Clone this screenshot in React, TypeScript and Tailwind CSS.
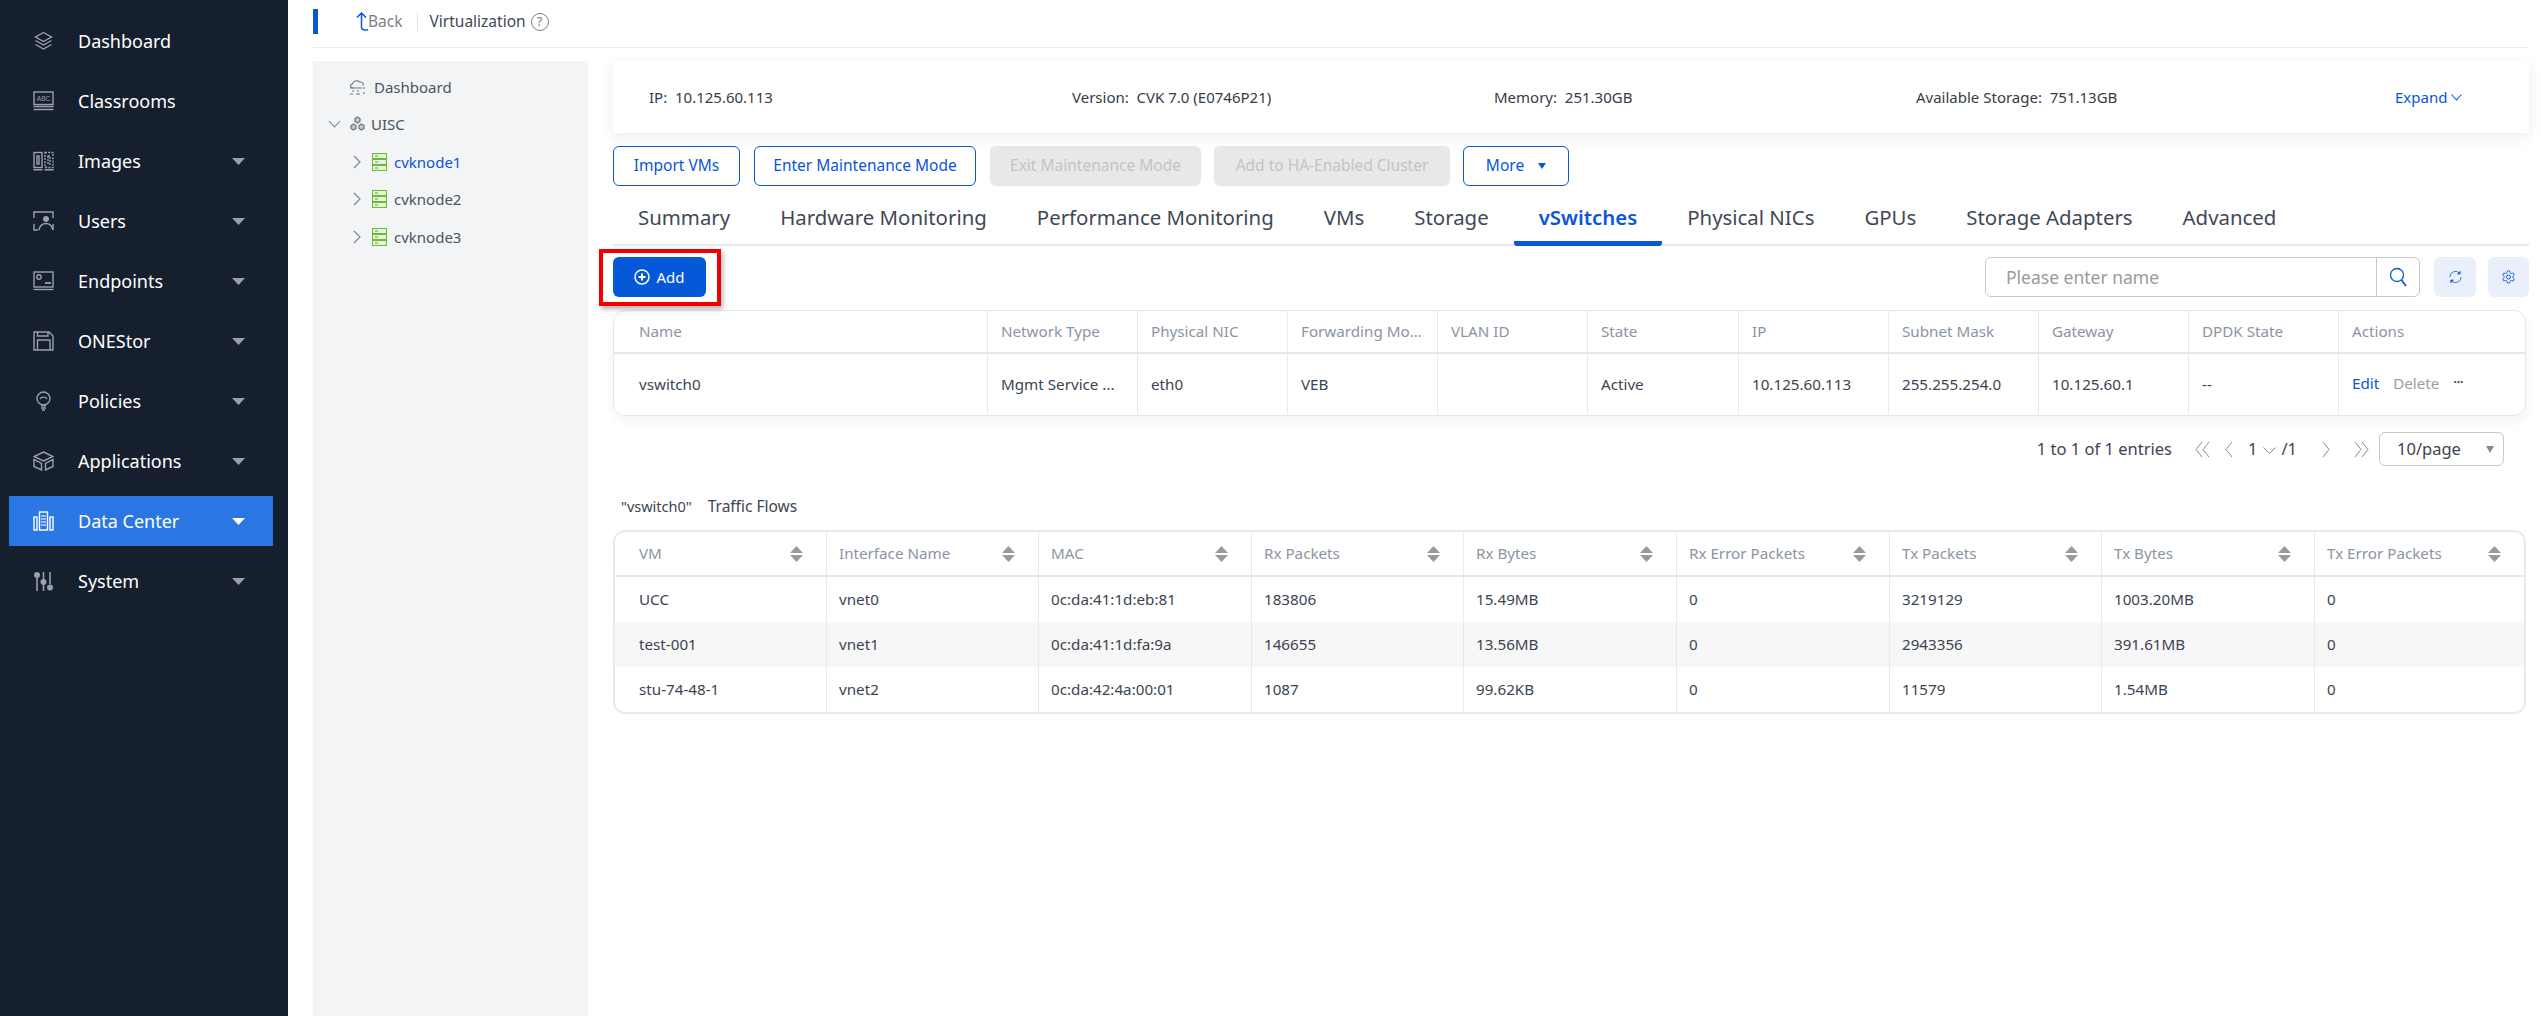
import React from "react";

const S = { stroke: "currentColor", fill: "none", strokeWidth: 1.4 } as const;

const NavIcons: Record<string, React.ReactNode> = {
  Dashboard: (
    <svg width="21" height="20" viewBox="0 0 21 20" {...S}>
      <path d="M10.5 1.5 18.5 6 10.5 10.5 2.5 6Z" />
      <path d="M2.5 9.5 10.5 14 18.5 9.5" />
      <path d="M2.5 13.5 10.5 18 18.5 13.5" />
    </svg>
  ),
  Classrooms: (
    <svg width="21" height="20" viewBox="0 0 21 20" {...S}>
      <rect x="1" y="1" width="19" height="12.5" />
      <text x="10.5" y="10" textAnchor="middle" fontSize="6.5" fill="currentColor" stroke="none" fontFamily="Liberation Sans">ABC</text>
      <path d="M0.5 15.5H20.5M0.5 18.5H20.5" />
    </svg>
  ),
  Images: (
    <svg width="21" height="20" viewBox="0 0 21 20" {...S}>
      <rect x="1" y="1.5" width="8" height="15" />
      <rect x="4" y="5" width="2" height="8" />
      <rect x="12" y="1.5" width="8" height="15" strokeDasharray="2 1.2" />
      <rect x="15" y="5" width="2" height="8" strokeDasharray="2 1" />
      <path d="M0.5 18.8H9.5M11.5 18.8H20.5" />
    </svg>
  ),
  Users: (
    <svg width="21" height="20" viewBox="0 0 21 20" {...S}>
      <path d="M1 7V1H20V7M1 13V19H5M20 13V19" />
      <circle cx="13" cy="8" r="3" fill="currentColor" stroke="none" />
      <path d="M6 19C7 14 10 12.5 13 12.5S19 15 20 19" />
    </svg>
  ),
  Endpoints: (
    <svg width="21" height="20" viewBox="0 0 21 20" {...S}>
      <rect x="1" y="1" width="19" height="15" />
      <circle cx="6" cy="6" r="2.2" />
      <path d="M12 12H18" strokeWidth="1.8" />
      <path d="M0.5 18.5H20.5" />
    </svg>
  ),
  ONEStor: (
    <svg width="21" height="20" viewBox="0 0 21 20" {...S}>
      <path d="M1 1H16L20 5V19H1Z" />
      <path d="M4.5 1V5H15V1" />
      <path d="M4.5 19V9H17V19" />
    </svg>
  ),
  Policies: (
    <svg width="21" height="20" viewBox="0 0 21 20" {...S}>
      <circle cx="10.5" cy="7.5" r="6.5" />
      <path d="M7 8C8 5.5 13 5.5 14 8" />
      <path d="M8 14.8H13M8 17H13M9 19H12" />
    </svg>
  ),
  Applications: (
    <svg width="21" height="20" viewBox="0 0 21 20" {...S}>
      <path d="M10.5 1 20 5.5 10.5 10 1 5.5Z" />
      <path d="M1 8.5V15.5L8.5 19V12.5L1 8.5ZM20 8.5V15.5L12.5 19V12.5L20 8.5Z" />
    </svg>
  ),
  "Data Center": (
    <svg width="21" height="20" viewBox="0 0 21 20" {...S}>
      <rect x="1" y="6" width="3" height="13" />
      <rect x="6.5" y="1" width="8" height="18" />
      <path d="M8 5H13M8 8H13M8 11H13M8 14H13" stroke="#bcd3ff" />
      <rect x="17" y="6" width="3" height="13" />
    </svg>
  ),
  System: (
    <svg width="21" height="20" viewBox="0 0 21 20" {...S} strokeWidth="1.6">
      <path d="M4 5V20M10.5 1V9M10.5 13V20M17 1V13" />
      <circle cx="4" cy="4" r="3" fill="currentColor" stroke="none" />
      <circle cx="10.5" cy="11" r="3" fill="currentColor" stroke="none" />
      <circle cx="17" cy="16.5" r="3" fill="currentColor" stroke="none" />
    </svg>
  ),
};

const navItems: [string, boolean][] = [
  ["Dashboard", false],
  ["Classrooms", false],
  ["Images", true],
  ["Users", true],
  ["Endpoints", true],
  ["ONEStor", true],
  ["Policies", true],
  ["Applications", true],
  ["Data Center", true],
  ["System", true],
];

function Caret({ active }: { active: boolean }) {
  return (
    <svg width="13" height="7" viewBox="0 0 13 7" className={active ? "ml-auto mr-[28px] text-white" : "ml-auto mr-[28px] text-[#9a9fa8]"}>
      <path d="M0 0H13L6.5 7Z" fill="currentColor" />
    </svg>
  );
}

function Sidebar() {
  return (
    <aside className="w-[288px] shrink-0 bg-[#161f2e] pt-[16px] pl-[9px] pr-[15px] min-h-[1016px]">
      {navItems.map(([name, hasCaret]) => {
        const active = name === "Data Center";
        return (
          <div
            key={name}
            className={
              active
                ? "flex items-center h-[50px] mb-[10px] bg-[#2a77e4] text-white"
                : "flex items-center h-[50px] mb-[10px] text-white"
            }
          >
            <span className={active ? "w-[69px] pl-[24px] text-white flex" : "w-[69px] pl-[24px] text-[#9ba1aa] flex"}>{NavIcons[name]}</span>
            <span className="text-[18px] leading-none">{name}</span>
            {hasCaret && <Caret active={active} />}
          </div>
        );
      })}
    </aside>
  );
}

function TreeServer() {
  return (
    <svg width="15" height="18" viewBox="0 0 15 18">
      <rect x="0.5" y="0.5" width="14" height="5" fill="#e6f3db" stroke="#6dbb35" />
      <rect x="0.5" y="6.5" width="14" height="5" fill="#e6f3db" stroke="#6dbb35" />
      <rect x="0.5" y="12.5" width="14" height="5" fill="#e6f3db" stroke="#6dbb35" />
      <path d="M3 3H6M3 9H6M3 15H6" stroke="#7d8a74" />
    </svg>
  );
}

function Chevron({ dir, className }: { dir: "r" | "d"; className?: string }) {
  return dir === "r" ? (
    <svg width="8" height="14" viewBox="0 0 8 14" className={className} fill="none" stroke="#7b8390" strokeWidth="1.1">
      <path d="M1 1 7 7 1 13" />
    </svg>
  ) : (
    <svg width="13" height="8" viewBox="0 0 13 8" className={className} fill="none" stroke="#7b8390" strokeWidth="1.1">
      <path d="M1 1 6.5 7 12 1" />
    </svg>
  );
}

function TreePanel() {
  const nodes = [
    ["cvknode1", "text-[#0a55d8]", "mt-[18px]"],
    ["cvknode2", "text-[#4a5361]", "mt-[17px]"],
    ["cvknode3", "text-[#4a5361]", "mt-[18px]"],
  ];
  return (
    <div className="w-[275px] shrink-0 bg-[#f3f4f6] pt-[16px] text-[15px] leading-[20px] text-[#4a5361]">
      <div className="flex items-center pl-[36px] h-[20px]">
        <svg width="18" height="16" viewBox="0 0 18 16" fill="none" stroke="#6b7380" strokeWidth="1.1" className="mr-[7px]">
          <path d="M4 9C1 9 .5 5.5 3.5 5 4 2 8 .5 10.5 3 13.5 2.5 15 5 14 6.5" />
          <path d="M1 9H13M3 12H5M8 12H10M1 15H4M7 15H11M15 8V10M15 13V15" />
        </svg>
        <span>Dashboard</span>
      </div>
      <div className="flex items-center pl-[15px] h-[20px] mt-[17px]">
        <Chevron dir="d" className="mr-[9px]" />
        <svg width="15" height="17" viewBox="0 0 15 17" fill="none" stroke="#6b7380" strokeWidth="1.2" className="mr-[6px]">
          <path d="M7.5 1 10 2.5V5.5L7.5 7 5 5.5V2.5Z" fill="#c4c8ce" />
          <path d="M3.5 8 6 9.5V12.5L3.5 14 1 12.5V9.5Z" fill="#c4c8ce" />
          <path d="M11.5 8 14 9.5V12.5L11.5 14 9 12.5V9.5Z" fill="#c4c8ce" />
        </svg>
        <span>UISC</span>
      </div>
      {nodes.map(([n, c, m]) => (
        <div key={n} className={`flex items-center pl-[40px] h-[20px] ${m}`}>
          <Chevron dir="r" className="mr-[11px]" />
          <TreeServer />
          <span className={`ml-[7px] ${c}`}>{n}</span>
        </div>
      ))}
    </div>
  );
}

function InfoCard() {
  return (
    <div className="h-[72px] bg-white shadow-[0_4px_14px_rgba(0,0,0,0.08)] flex items-center pl-[36px] text-[15px] text-[#363c47]">
      <span className="w-[423px]">IP:&nbsp; 10.125.60.113</span>
      <span className="w-[422px]">Version:&nbsp; CVK 7.0 (E0746P21)</span>
      <span className="w-[422px]">Memory:&nbsp; 251.30GB</span>
      <span className="w-[479px]">Available Storage:&nbsp; 751.13GB</span>
      <span className="flex items-center gap-[4px] text-[#0a55d8]">
        Expand
        <svg width="11" height="7" viewBox="0 0 11 7" fill="none" stroke="currentColor" strokeWidth="1.1">
          <path d="M.5.5 5.5 6 10.5.5" />
        </svg>
      </span>
    </div>
  );
}

function ActionButtons() {
  const outline = "h-[40px] rounded-[6px] border border-[#0a55d8] bg-white text-[#0a55d8] flex items-center justify-center text-[15.5px]";
  const disabled = "h-[40px] rounded-[6px] bg-[#e8e8e8] text-[#c2c4c8] flex items-center justify-center text-[15.5px]";
  return (
    <div className="flex mt-[13px]">
      <button className={`${outline} w-[127px]`}>Import VMs</button>
      <button className={`${outline} w-[222px] ml-[14px]`}>Enter Maintenance Mode</button>
      <button className={`${disabled} w-[211px] ml-[14px]`}>Exit Maintenance Mode</button>
      <button className={`${disabled} w-[236px] ml-[13px]`}>Add to HA-Enabled Cluster</button>
      <button className={`${outline} w-[106px] ml-[13px] gap-[14px]`}>
        More
        <svg width="8" height="6" viewBox="0 0 8 6"><path d="M0 0H8L4 6Z" fill="currentColor" /></svg>
      </button>
    </div>
  );
}

function Tabs() {
  const tabs = ["Summary", "Hardware Monitoring", "Performance Monitoring", "VMs", "Storage", "vSwitches", "Physical NICs", "GPUs", "Storage Adapters", "Advanced"];
  return (
    <div className="flex h-[60px] border-b-2 border-[#e8e9ec]">
      {tabs.map((t) => {
        const active = t === "vSwitches";
        return (
          <div
            key={t}
            className={
              active
                ? "px-[25px] pt-[17px] h-[60px] text-[20.4px] leading-[28px] font-semibold text-[#0a55d8] border-b-[5px] rounded-b-[3px] border-[#0a55d8]"
                : "px-[25px] pt-[17px] h-[60px] text-[20.4px] leading-[28px] text-[#3f4856]"
            }
          >
            {t}
          </div>
        );
      })}
    </div>
  );
}

function Toolbar() {
  return (
    <div className="flex mt-[11px] h-[40px] items-center">
      <div className="relative">
        <button className="w-[93px] h-[40px] rounded-[6px] bg-[#0558d8] text-white flex items-center justify-center gap-[6px] text-[15px]">
          <svg width="16" height="16" viewBox="0 0 16 16" fill="none" stroke="currentColor" strokeWidth="1.5">
            <circle cx="8" cy="8" r="7" />
            <path d="M8 4.5V11.5M4.5 8H11.5" strokeWidth="2" />
          </svg>
          Add
        </button>
        <div className="absolute left-[-14px] top-[-8px] w-[122px] h-[57px] border-[4px] border-[#f00000] shadow-[2px_3px_5px_rgba(0,0,0,0.3)]" />
      </div>
      <div className="ml-auto w-[435px] h-[40px] rounded-[6px] border border-[#c9c9c9] flex items-center">
        <span className="flex-1 pl-[20px] text-[17.5px] text-[#9a9a9a]">Please enter name</span>
        <span className="w-[43px] h-[38px] border-l border-[#c9c9c9] flex items-center justify-center">
          <svg width="18" height="20" viewBox="0 0 18 20" fill="none" stroke="#0a55d8" strokeWidth="1.3">
            <circle cx="8" cy="8" r="6.5" />
            <path d="M12.5 13 17 19" strokeWidth="1.8" />
          </svg>
        </span>
      </div>
      <button className="ml-[14px] w-[42px] h-[40px] rounded-[6px] bg-[#e9f0fc] flex items-center justify-center">
        <svg width="15" height="16" viewBox="0 0 16 16" fill="none" stroke="#2f6fdc" strokeWidth="1">
          <path d="M2 8A6 6 0 0 1 12.5 4" />
          <path d="M14 8A6 6 0 0 1 3.5 12" />
          <path d="M13 2V4.8H10.2Z" fill="#0a55d8" />
          <path d="M3 14V11.2H5.8Z" fill="#0a55d8" />
        </svg>
      </button>
      <button className="ml-[12px] w-[41px] h-[40px] rounded-[6px] bg-[#e9f0fc] flex items-center justify-center">
        <svg width="15" height="18" viewBox="0 0 24 24" fill="none" stroke="#0a55d8" strokeWidth="1.5">
          <path d="M12.22 2h-.44a2 2 0 0 0-2 2v.18a2 2 0 0 1-1 1.73l-.43.25a2 2 0 0 1-2 0l-.15-.08a2 2 0 0 0-2.73.73l-.22.38a2 2 0 0 0 .73 2.73l.15.1a2 2 0 0 1 1 1.72v.51a2 2 0 0 1-1 1.74l-.15.09a2 2 0 0 0-.73 2.73l.22.38a2 2 0 0 0 2.73.73l.15-.08a2 2 0 0 1 2 0l.43.25a2 2 0 0 1 1 1.73V20a2 2 0 0 0 2 2h.44a2 2 0 0 0 2-2v-.18a2 2 0 0 1 1-1.73l.43-.25a2 2 0 0 1 2 0l.15.08a2 2 0 0 0 2.73-.73l.22-.39a2 2 0 0 0-.73-2.73l-.15-.08a2 2 0 0 1-1-1.74v-.5a2 2 0 0 1 1-1.74l.15-.09a2 2 0 0 0 .73-2.73l-.22-.38a2 2 0 0 0-2.73-.73l-.15.08a2 2 0 0 1-2 0l-.43-.25a2 2 0 0 1-1-1.73V4a2 2 0 0 0-2-2z" />
          <circle cx="12" cy="12" r="3.2" />
        </svg>
      </button>
    </div>
  );
}

function SwitchTable() {
  const cols = "grid grid-cols-[374px_150px_150px_150px_150px_151px_150px_150px_150px_150px_1fr]";
  const head = ["Name", "Network Type", "Physical NIC", "Forwarding Mo...", "VLAN ID", "State", "IP", "Subnet Mask", "Gateway", "DPDK State", "Actions"];
  const row = ["vswitch0", "Mgmt Service ...", "eth0", "VEB", "", "Active", "10.125.60.113", "255.255.254.0", "10.125.60.1", "--"];
  return (
    <div className="mt-[13px] w-[1913px] h-[106px] rounded-[12px] border border-[#e6e7ea] shadow-[0_5px_12px_rgba(0,0,0,0.05)] text-[15.2px]">
      <div className={`${cols} h-[43px] border-b-2 border-[#e6e7ea] text-[#8b94a3]`}>
        {head.map((h, i) => (
          <div key={h} className={i === 0 ? "pl-[25px] flex items-center border-r border-[#e9eaed]" : i === 10 ? "pl-[13px] flex items-center" : "pl-[13px] flex items-center border-r border-[#e9eaed] whitespace-nowrap overflow-hidden"}>
            {h}
          </div>
        ))}
      </div>
      <div className={`${cols} h-[60px] text-[#3c4452]`}>
        {row.map((c, i) => (
          <div key={i} className={i === 0 ? "pl-[25px] flex items-center border-r border-[#e9eaed]" : "pl-[13px] flex items-center border-r border-[#e9eaed] whitespace-nowrap overflow-hidden"}>
            {c}
          </div>
        ))}
        <div className="pl-[13px] flex items-center pb-[2px]">
          <span className="text-[#0a55d8]">Edit</span>
          <span className="ml-[14px] text-[#9a9da3]">Delete</span>
          <span className="ml-[14px] mb-[8px] text-[#3c4452] font-bold text-[12px] leading-none">...</span>
        </div>
      </div>
    </div>
  );
}

function Pagination() {
  const chev = (d: string, w: number, k: string) => (
    <svg key={k} width={w} height="17" viewBox={`0 0 ${w} 17`} fill="none" stroke="#858b95" strokeWidth="1">
      <path d={d} />
    </svg>
  );
  return (
    <div className="mt-[16px] h-[34px] w-[1891px] flex items-center justify-end text-[16.5px] text-[#3c4452]">
      <span>1 to 1 of 1 entries</span>
      <span className="ml-[23px]">{chev("M7 1 1 8.5 7 16M14 1 8 8.5 14 16", 15, "a")}</span>
      <span className="ml-[15px]">{chev("M7 1 1 8.5 7 16", 8, "b")}</span>
      <span className="ml-[15px]">1</span>
      <svg width="13" height="7" viewBox="0 0 13 7" fill="none" stroke="#858b95" className="ml-[6px] mt-[2px]">
        <path d="M.5.5 6.5 6.5 12.5.5" />
      </svg>
      <span className="ml-[5px]">/1</span>
      <span className="ml-[25px]">{chev("M1 1 7 8.5 1 16", 8, "c")}</span>
      <span className="ml-[24px]">{chev("M1 1 7 8.5 1 16M8 1 14 8.5 8 16", 15, "d")}</span>
      <div className="ml-[10px] w-[125px] h-[34px] rounded-[6px] border border-[#c9c9c9] flex items-center pl-[17px] pr-[9px]">
        <span>10/page</span>
        <svg width="8" height="7" viewBox="0 0 8 7" className="ml-auto"><path d="M0 0H8L4 7Z" fill="#8a8a8a" /></svg>
      </div>
    </div>
  );
}

function Sort() {
  return (
    <svg width="13" height="16" viewBox="0 0 13 16" className="ml-auto mr-[23px]">
      <path d="M6.5 0 13 7H0Z M0 9H13L6.5 16Z" fill="#989a9e" />
    </svg>
  );
}

function FlowTable() {
  const cols = "grid grid-cols-[212px_212px_213px_212px_213px_213px_212px_213px_1fr]";
  const head = ["VM", "Interface Name", "MAC", "Rx Packets", "Rx Bytes", "Rx Error Packets", "Tx Packets", "Tx Bytes", "Tx Error Packets"];
  const rows = [
    ["UCC", "vnet0", "0c:da:41:1d:eb:81", "183806", "15.49MB", "0", "3219129", "1003.20MB", "0"],
    ["test-001", "vnet1", "0c:da:41:1d:fa:9a", "146655", "13.56MB", "0", "2943356", "391.61MB", "0"],
    ["stu-74-48-1", "vnet2", "0c:da:42:4a:00:01", "1087", "99.62KB", "0", "11579", "1.54MB", "0"],
  ];
  return (
    <div className="mt-[13px] w-[1913px] h-[184px] rounded-[12px] border-2 border-[#e9eaed] overflow-hidden text-[15.2px]">
      <div className={`${cols} h-[45px] border-b-2 border-[#e6e7ea] text-[#8b94a3]`}>
        {head.map((h, i) => (
          <div key={h} className={i === 0 ? "pl-[24px] flex items-center border-r border-[#e9eaed]" : i === 8 ? "pl-[12px] flex items-center" : "pl-[12px] flex items-center border-r border-[#e9eaed]"}>
            {h}
            <Sort />
          </div>
        ))}
      </div>
      {rows.map((r, ri) => (
        <div key={ri} className={ri === 1 ? `${cols} h-[45px] bg-[#f7f7f7] text-[#3c4452]` : `${cols} h-[45px] text-[#3c4452]`}>
          {r.map((c, i) => (
            <div key={i} className={i === 0 ? "pl-[24px] flex items-center border-r border-[#e9eaed]" : i === 8 ? "pl-[12px] flex items-center" : "pl-[12px] flex items-center border-r border-[#e9eaed]"}>
              {c}
            </div>
          ))}
        </div>
      ))}
    </div>
  );
}

export default function App() {
  return (
    <div className="flex w-[2541px] h-[1016px] overflow-hidden bg-white font-['Noto_Sans',sans-serif]">
      <Sidebar />
      <main className="flex-1 pl-[25px] pr-[12px] flex flex-col">
        <header className="h-[48px] border-b border-[#ececec] flex items-start shrink-0">
          <div className="mt-[9px] w-[5px] h-[25px] bg-[#0a55d8]" />
          <div className="mt-[9px] h-[25px] flex items-center ml-[38px] text-[15.5px]">
            <svg width="13" height="19" viewBox="0 0 13 19" fill="none" stroke="#0a55d8" strokeWidth="1.5">
              <path d="M1 5.5 5.5 1 10 5.5M5.5 1V15C5.5 17 7 18 9 18H12" />
            </svg>
            <span className="text-[#7a7f88] ml-[-1px]">Back</span>
            <span className="w-px h-[18px] bg-[#e3e3e3] ml-[14px]" />
            <span className="ml-[12px] text-[#3f4856]">Virtualization</span>
            <span className="ml-[5px] w-[18px] h-[18px] rounded-full border border-[#7a7f88] text-[#7a7f88] text-[13px] leading-none flex items-center justify-center">?</span>
          </div>
        </header>
        <div className="flex flex-1 mt-[13px] min-h-0">
          <TreePanel />
          <div className="flex-1 ml-[25px] min-w-0">
            <InfoCard />
            <ActionButtons />
            <Tabs />
            <Toolbar />
            <SwitchTable />
            <Pagination />
            <div className="mt-[31px] h-[20px] pl-[8px] flex items-center text-[14.5px] text-[#3c4452]">
              <span>"vswitch0"</span>
              <span className="ml-[16px] text-[15.5px]">Traffic Flows</span>
            </div>
            <FlowTable />
          </div>
        </div>
      </main>
    </div>
  );
}
